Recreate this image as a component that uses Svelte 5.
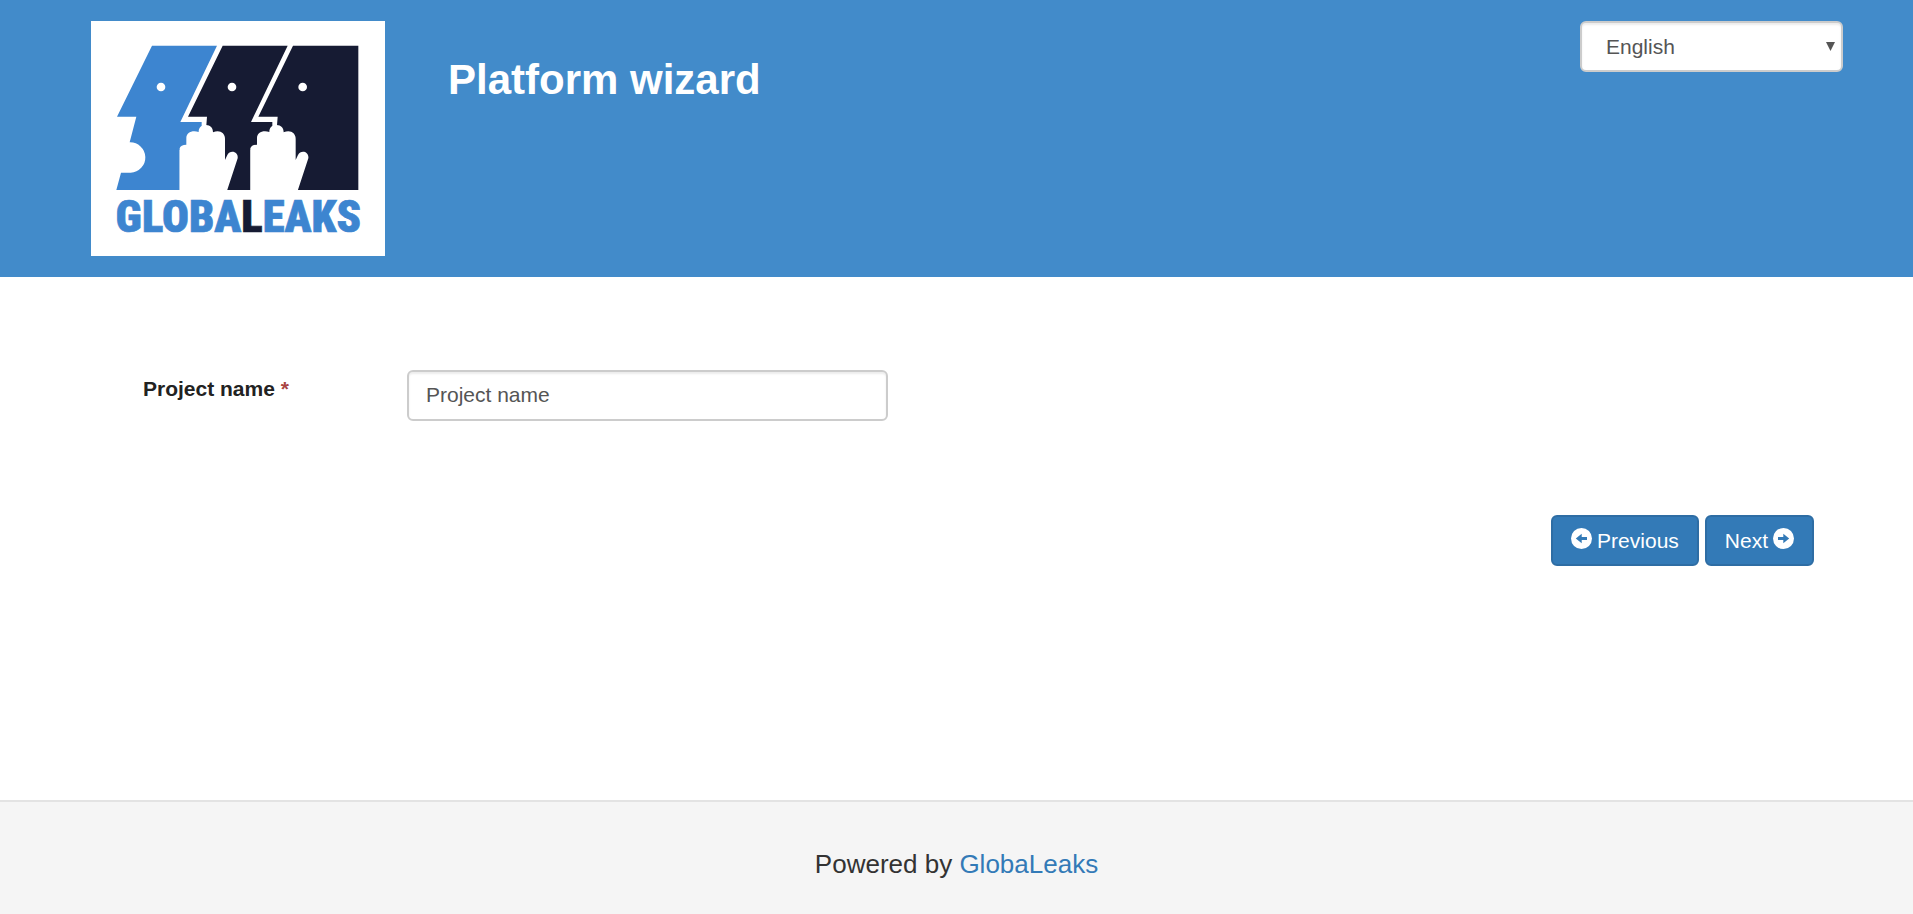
<script>
  let language = $state('English');
  let projectName = $state('');
</script>

<div class="page">
  <header>
    <svg class="logo" viewBox="33 33 882 705" role="img" aria-label="GlobaLeaks">
      <rect x="33" y="33" width="882" height="705" fill="#fff" />
      <path class="blue" d="M216 107H411L301 336H365V420H299V540H109L123 488H152A45 45 0 0 0 149 397L169 320H111Z" />
      <path class="navy" d="M428 107H623L513 336H577V420H512V540H376V380L379 346L381 320H324Z" />
      <path class="navy" d="M639 107H835V540H588V380L591 346L593 320H535Z" />
      <g fill="#fff">
        <circle cx="243" cy="231" r="13" />
        <circle cx="456" cy="231" r="13" />
        <circle cx="668" cy="231" r="13" />
        <path d="M299 542V415Q302 404 319 404V384C319 368 336 360 356 366C356 352 364 345 378 345C391 345 399 354 399 367C418 358 435 368 435 386V450L442 435C450 418 476 424 473 445L441 542Z" />
        <path d="M511 542V415Q514 404 531 404V384C531 368 548 360 568 366C568 352 576 345 590 345C603 345 611 354 611 367C630 358 647 368 647 386V450L654 435C662 418 688 424 685 445L653 542Z" />
      </g>
      <text class="blue wordmark" x="475" y="665" text-anchor="middle">GLOBA<tspan class="navy">L</tspan>EAKS</text>
    </svg>
    <h1>Platform wizard</h1>
    <div class="language">
      <select aria-label="Language" bind:value={language}>
        <option>English</option>
      </select>
      <svg viewBox="0 0 9 9" aria-hidden="true"><path d="M0 0H9L4.500 9Z" fill="#555" /></svg>
    </div>
  </header>

  <main>
    <div class="field">
      <label for="project-name">Project name <span class="required">*</span></label>
      <input id="project-name" type="text" placeholder="Project name" bind:value={projectName} />
    </div>
    <div class="actions">
      <button type="button">
        <svg viewBox="0 0 21 21" aria-hidden="true">
          <circle cx="10.500" cy="10.500" r="10.500" fill="#fff" />
          <path d="M4.800 10.500L10.700 5.800V9H16V12H10.700V15.200Z" fill="#337ab7" />
        </svg>
        <span>Previous</span>
      </button>
      <button type="button">
        <span>Next</span>
        <svg viewBox="0 0 21 21" aria-hidden="true">
          <circle cx="10.500" cy="10.500" r="10.500" fill="#fff" />
          <path d="M16.200 10.500L10.300 5.800V9H5V12H10.300V15.200Z" fill="#337ab7" />
        </svg>
      </button>
    </div>
  </main>

  <footer>Powered by <a href="#globaleaks">GlobaLeaks</a></footer>
</div>

<style>
  :global(body) {
    background: #fff;
  }

  .page,
  .page * {
    box-sizing: border-box;
  }

  .page {
    display: flex;
    flex-direction: column;
    min-height: 100vh;
    font-family: "Liberation Sans", Arial, sans-serif;
    font-size: 21px;
    line-height: 30px;
    color: #222;
  }

  header {
    display: flex;
    align-items: flex-start;
    padding: 21px 70px 21px 91px;
    background: #428bca;
  }

  .logo {
    display: block;
    flex: none;
    width: 294px;
    height: 235px;
  }

  .blue {
    fill: #3d85d0;
  }

  .navy {
    fill: #161b33;
  }

  .wordmark {
    font-family: "Roboto Condensed", "Liberation Sans Narrow", "Liberation Sans", sans-serif;
    font-size: 134px;
    font-weight: 900;
    stroke: #3d85d0;
    stroke-width: 2px;
  }

  .wordmark .navy {
    stroke: #161b33;
  }

  h1 {
    flex: 1;
    margin: 35px 0 0 63px;
    font-size: 42px;
    line-height: 48px;
    font-weight: 700;
    color: #fff;
  }

  .language {
    position: relative;
    width: 263px;
  }

  .language svg {
    position: absolute;
    top: 21px;
    right: 8px;
    width: 9px;
    height: 9px;
    pointer-events: none;
  }

  select,
  input {
    display: block;
    width: 100%;
    height: 51px;
    border: 2px solid #ccc;
    border-radius: 6px;
    background: #fff;
    box-shadow: inset 0 2px 2px rgba(0, 0, 0, 0.075);
    font: inherit;
    color: #555;
  }

  select {
    appearance: none;
    padding: 0 24px;
  }

  input {
    padding: 0 17px 2px;
  }

  input::placeholder {
    color: #555;
    opacity: 1;
  }

  main {
    flex: 1;
    padding: 93px 99px 48px 143px;
  }

  .field {
    display: grid;
    grid-template-columns: 264px minmax(0, 481px);
    align-items: start;
  }

  label {
    padding-top: 4px;
    font-weight: 700;
  }

  .required {
    color: #a94442;
  }

  .actions {
    display: flex;
    justify-content: flex-end;
    gap: 6px;
    margin-top: 94px;
  }

  button {
    display: flex;
    align-items: center;
    gap: 5px;
    height: 51px;
    padding: 0 18px;
    border: 2px solid #2e6da4;
    border-radius: 6px;
    background: #337ab7;
    font: inherit;
    color: #fff;
  }

  button svg {
    width: 21px;
    height: 21px;
    margin-bottom: 4px;
  }

  footer {
    padding: 47px 20px 35px;
    border-top: 2px solid #e3e3e3;
    background: #f5f5f5;
    font-size: 26px;
    text-align: center;
    color: #333;
  }

  a {
    color: #337ab7;
    text-decoration: none;
  }
</style>
